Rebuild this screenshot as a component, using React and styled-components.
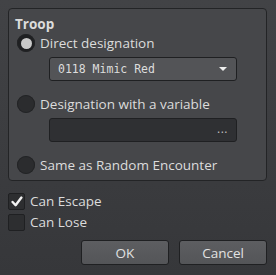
import React, { useState } from "react";
import styled, { createGlobalStyle } from "styled-components";

const GlobalStyle = createGlobalStyle`
  html, body {
    margin: 0;
    padding: 0;
    background: #3c3d40;
  }
  * {
    box-sizing: border-box;
  }
`;

const Dialog = styled.div`
  width: 276px;
  height: 275px;
  padding: 8px 9px 0 8px;
  background: linear-gradient(#424346, #36373a);
  font-family: "Open Sans", "DejaVu Sans", sans-serif;
  font-size: 13.5px;
  color: #dcdcdc;
  display: flex;
  flex-direction: column;
`;

const GroupBox = styled.div`
  border: 1px solid #232426;
  border-radius: 4px;
  background: #46474a;
  padding: 7px 8px 5px 6px;
  display: flex;
  flex-direction: column;
`;

const GroupTitle = styled.div`
  font-weight: bold;
  line-height: 16px;
  height: 16px;
  margin-bottom: 1px;
`;

const RadioRow = styled.label`
  display: flex;
  align-items: center;
  gap: 5px;
  height: 20px;
  padding-left: 2px;
  margin-top: ${(p) => p.$top || 0}px;
  white-space: nowrap;
`;

const RadioDot = styled.span`
  width: 18px;
  height: 18px;
  border-radius: 50%;
  flex: none;
  display: flex;
  align-items: center;
  justify-content: center;
  background: ${(p) => (p.$on ? "#1f2022" : "#2b2c2e")};
  box-shadow: inset 0 0 0 1px #232426;

  &::after {
    content: "";
    width: 11px;
    height: 11px;
    border-radius: 50%;
    background: #c9c9c9;
    display: ${(p) => (p.$on ? "block" : "none")};
  }
`;

const Combo = styled.div`
  margin: 4px 21px 0 34px;
  height: 24px;
  border: 1px solid #1f2022;
  border-radius: 3px;
  background: #535457;
  display: flex;
  align-items: center;
  justify-content: space-between;
  padding: 0 8px 0 8px;
  font-family: "DejaVu Sans Mono", "Liberation Mono", monospace;
  font-size: 11.5px;
  color: #dddddd;
`;

const Arrow = styled.span`
  width: 0;
  height: 0;
  border-left: 4px solid transparent;
  border-right: 4px solid transparent;
  border-top: 4px solid #eeeeee;
  margin-right: 1px;
`;

const VarField = styled.div`
  margin: 4px 21px 0 34px;
  height: 24px;
  border: 1px solid #1f2022;
  border-radius: 3px;
  background: #2f3033;
  display: flex;
  align-items: center;
  justify-content: flex-end;
  padding: 0 8px 4px 0;
  color: #bfbfbf;
  font-size: 12px;
  letter-spacing: 0.5px;
`;

const CheckList = styled.div`
  margin-top: 11px;
  display: flex;
  flex-direction: column;
  gap: 3px;
`;

const CheckRow = styled.label`
  display: flex;
  align-items: center;
  gap: 5px;
  height: 18px;
`;

const CheckBox = styled.span`
  width: 17px;
  height: 17px;
  flex: none;
  border: 1px solid #1f2022;
  border-radius: 2px;
  background: #2d2e30;
  display: flex;
  align-items: center;
  justify-content: center;
`;

const ButtonBar = styled.div`
  margin-top: 9px;
  display: flex;
  justify-content: flex-end;
  gap: 10px;
`;

const Button = styled.button`
  width: 88px;
  height: 25px;
  border: 1px solid #1f2022;
  border-radius: 3px;
  background: linear-gradient(#5d5e61, #545558);
  color: #e2e2e2;
  font-family: "Open Sans", "DejaVu Sans", sans-serif;
  font-size: 13.5px;
  padding: 0;
`;

const Check = () => (
  <svg width="12" height="11" viewBox="0 0 12 11">
    <path
      d="M1.6 6 L4.6 9.2 L10.4 1.6"
      fill="none"
      stroke="#f2f2f2"
      strokeWidth="2.4"
      strokeLinecap="round"
      strokeLinejoin="round"
    />
  </svg>
);

export default function App() {
  const [mode] = useState(0);
  return (
    <>
      <GlobalStyle />
      <Dialog>
        <GroupBox>
          <GroupTitle>Troop</GroupTitle>
          <RadioRow>
            <RadioDot $on={mode === 0} />
            Direct designation
          </RadioRow>
          <Combo>
            <span>0118 Mimic Red</span>
            <Arrow />
          </Combo>
          <RadioRow $top={13}>
            <RadioDot $on={mode === 1} />
            Designation with a variable
          </RadioRow>
          <VarField>...</VarField>
          <RadioRow $top={13}>
            <RadioDot $on={mode === 2} />
            Same as Random Encounter
          </RadioRow>
        </GroupBox>
        <CheckList>
          <CheckRow>
            <CheckBox>
              <Check />
            </CheckBox>
            Can Escape
          </CheckRow>
          <CheckRow>
            <CheckBox />
            Can Lose
          </CheckRow>
        </CheckList>
        <ButtonBar>
          <Button>OK</Button>
          <Button>Cancel</Button>
        </ButtonBar>
      </Dialog>
    </>
  );
}
